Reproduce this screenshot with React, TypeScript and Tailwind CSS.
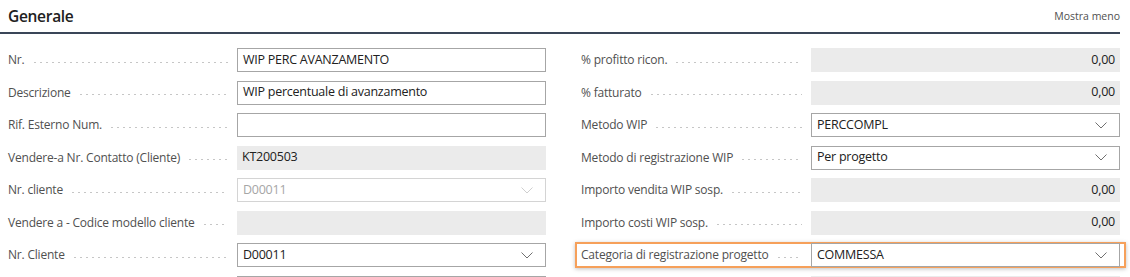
type Field = {
  label: string;
  value?: string;
  kind: 'input' | 'readonly' | 'select' | 'disabledSelect';
  align?: 'left' | 'right';
  highlight?: boolean;
};

const font = "'Open Sans', 'Liberation Sans', sans-serif";

const leftFields: Field[] = [
  { label: 'Nr.', value: 'WIP PERC AVANZAMENTO', kind: 'input' },
  { label: 'Descrizione', value: 'WIP percentuale di avanzamento', kind: 'input' },
  { label: 'Rif. Esterno Num.', value: '', kind: 'input' },
  { label: 'Vendere-a Nr. Contatto (Cliente)', value: 'KT200503', kind: 'readonly' },
  { label: 'Nr. cliente', value: 'D00011', kind: 'disabledSelect' },
  { label: 'Vendere a - Codice modello cliente', value: '', kind: 'readonly' },
  { label: 'Nr. Cliente', value: 'D00011', kind: 'select' },
  { label: '', value: '', kind: 'input' },
];

const rightFields: Field[] = [
  { label: '% profitto ricon.', value: '0,00', kind: 'readonly', align: 'right' },
  { label: '% fatturato', value: '0,00', kind: 'readonly', align: 'right' },
  { label: 'Metodo WIP', value: 'PERCCOMPL', kind: 'select' },
  { label: 'Metodo di registrazione WIP', value: 'Per progetto', kind: 'select' },
  { label: 'Importo vendita WIP sosp.', value: '0,00', kind: 'readonly', align: 'right' },
  { label: 'Importo costi WIP sosp.', value: '0,00', kind: 'readonly', align: 'right' },
  { label: 'Categoria di registrazione progetto', value: 'COMMESSA', kind: 'select', highlight: true },
  { label: '', value: '', kind: 'readonly' },
];

function Chevron({ color }: { color: string }) {
  return (
    <svg width="12" height="7" viewBox="0 0 12 7" className="mr-[7px]">
      <polyline points="0.5,0.5 6,6 11.5,0.5" fill="none" stroke={color} strokeWidth="1" />
    </svg>
  );
}

function Control({ field }: { field: Field }) {
  const base = 'h-6 w-[309px] flex items-center px-[5px] text-[12.5px] tracking-[-0.25px] shrink-0';
  if (field.kind === 'readonly') {
    return (
      <div className={`${base} bg-[#ebebeb] text-[#212121] ${field.align === 'right' ? 'justify-end' : ''}`}>
        {field.value}
      </div>
    );
  }
  if (field.kind === 'input') {
    return <div className={`${base} border border-[#a6a6a6] bg-white text-[#212121]`}>{field.value}</div>;
  }
  const disabled = field.kind === 'disabledSelect';
  return (
    <div
      className={`${base} justify-between border bg-white ${
        disabled ? 'border-[#d4d4d4] text-[#a6a6a6]' : 'border-[#a6a6a6] text-[#212121]'
      }`}
    >
      <span>{field.value}</span>
      <Chevron color={disabled ? '#cfcfcf' : '#707070'} />
    </div>
  );
}

function Row({ field, labelWidth }: { field: Field; labelWidth: string }) {
  return (
    <div
      className={`flex items-center ${
        field.highlight
          ? '-mx-[6px] my-[3.25px] h-[26px] border-2 border-[#f6a05a] px-[4px] shadow-[0_1px_4px_rgba(0,0,0,0.25)]'
          : 'h-[32.5px]'
      }`}
    >
      <div className={`flex ${labelWidth} items-center pr-[9px]`}>
        <span className="whitespace-nowrap text-[12px] tracking-[-0.2px] text-[#505050]">{field.label}</span>
        {field.label && (
          <span className="ml-[7px] mt-[4px] h-[3px] flex-1 bg-[radial-gradient(circle,_#c6c6c6_0.8px,_transparent_1.1px)] bg-[length:6px_3px] bg-repeat-x" />
        )}
      </div>
      <Control field={field} />
    </div>
  );
}

export default function App() {
  return (
    <div className="h-[277px] w-[1130px] overflow-hidden bg-white" style={{ fontFamily: font }}>
      <div className="w-[1120px]">
        <div className="flex h-[34px] items-center justify-between border-b-2 border-[#3a4658] pl-2">
          <span className="pt-[2px] text-[15.5px] font-semibold tracking-[-0.3px] text-[#212121]">Generale</span>
          <span className="pt-[2px] text-[10.5px] text-[#505050]">Mostra meno</span>
        </div>
        <div className="mt-[10px] flex">
          <div className="flex flex-col pl-2">
            {leftFields.map((f, i) => (
              <Row key={i} field={f} labelWidth="w-[229px]" />
            ))}
          </div>
          <div className="ml-[35px] flex flex-col">
            {rightFields.map((f, i) => (
              <Row key={i} field={f} labelWidth="w-[230px]" />
            ))}
          </div>
        </div>
      </div>
    </div>
  );
}
